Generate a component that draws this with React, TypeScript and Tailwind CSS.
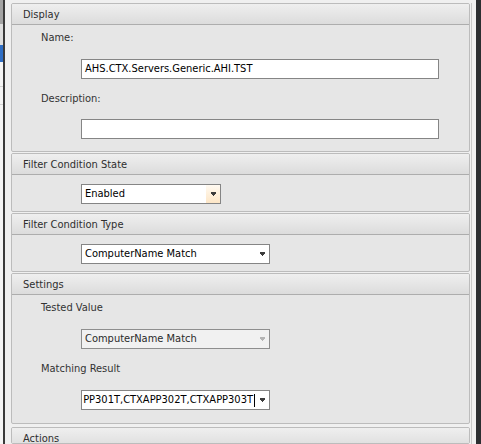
import React from "react";

const font = "font-['DejaVu_Sans_Condensed','DejaVu_Sans',sans-serif] font-stretch-condensed";

const Arrow = ({ color = "#3c3c3c" }: { color?: string }) => (
  <svg width="5" height="4" viewBox="0 0 5 4" shapeRendering="crispEdges">
    <rect x="0" y="0" width="5" height="1" fill={color} />
    <rect x="0" y="1" width="5" height="1" fill={color} />
    <rect x="1" y="2" width="3" height="1" fill={color} />
    <rect x="2" y="3" width="1" height="1" fill={color} />
  </svg>
);

const Header = ({ title }: { title: string }) => (
  <div className="h-[21px] flex items-center pl-[11px] pt-[2px] border-b border-[#adadad] bg-gradient-to-b from-[#efefef] to-[#dcdcdc] text-[#2e2e2e]">
    {title}
  </div>
);

const Section = ({
  title,
  children,
  className = "",
}: {
  title: string;
  children?: React.ReactNode;
  className?: string;
}) => (
  <div className={`border border-[#bcbcbc] rounded-[2px] bg-[#e6e6e6] overflow-hidden ${className}`}>
    <Header title={title} />
    {children}
  </div>
);

const Label = ({ text, className = "" }: { text: string; className?: string }) => (
  <div className={`h-[12px] leading-[16px] pl-[29px] text-[#333] ${className}`}>{text}</div>
);

const TextBox = ({ value = "", className = "" }: { value?: string; className?: string }) => (
  <div
    className={`ml-[69px] w-[358px] h-[20px] border border-[#858585] bg-white flex items-center px-[3px] text-black ${className}`}
  >
    {value}
  </div>
);

const Combo = ({
  value,
  width,
  disabled = false,
  hover = false,
  caret = false,
  className = "",
}: {
  value: string;
  width: string;
  disabled?: boolean;
  hover?: boolean;
  caret?: boolean;
  className?: string;
}) => (
  <div
    className={`ml-[69px] ${width} h-[20px] border ${
      disabled ? "border-[#8e8e8e] bg-[#f1f1f1]" : "border-[#858585] bg-white"
    } flex ${className}`}
  >
    <div className={`flex-1 flex items-center overflow-hidden pl-[3px] ${caret ? "justify-end" : ""}`}>
      <span className={`whitespace-nowrap ${disabled ? "text-[#2b2b2b]" : "text-black"}`}>{value}</span>
      {caret && <span className="w-[1px] h-[13px] bg-black ml-[1px] shrink-0" />}
    </div>
    <div
      className={`w-[14px] flex items-center justify-center ${
        hover ? "bg-gradient-to-b from-[#fffaf2] to-[#fde6c6]" : ""
      }`}
    >
      <Arrow color={disabled ? "#b4b4b4" : "#3c3c3c"} />
    </div>
  </div>
);

export default function App() {
  return (
    <div className={`w-[481px] h-[444px] overflow-hidden flex bg-[#f0f0f0] text-[11px] ${font}`}>
      {/* left neighbour strip */}
      <div className="w-[3px] flex flex-col">
        <div className="h-[24px] bg-[#a3a3a3]" />
        <div className="h-[21px] bg-[#dedede]" />
        <div className="h-[17px] bg-[#2f6ec4]" />
        <div className="h-[25px] bg-[#f5f5f5] border-b border-[#d3d3d3]" />
        <div className="h-[18px] bg-[#f5f5f5] border-b border-[#d3d3d3]" />
        <div className="flex-1 bg-[#f5f5f5]" />
      </div>
      <div className="w-[2px] bg-[#3a3a3a]" />

      {/* main panel */}
      <div className="flex-1 flex pl-[6px] pt-[3px]">
        <div className="w-[459px] flex flex-col">
          <Section title="Display" className="mb-[1px]">
            <div className="h-[126px] pt-[5px]">
              <Label text="Name:" />
              <TextBox value="AHS.CTX.Servers.Generic.AHI.TST" className="mt-[17px]" />
              <Label text="Description:" className="mt-[12px]" />
              <TextBox className="mt-[16px]" />
            </div>
          </Section>

          <Section title="Filter Condition State" className="mb-[1px]">
            <div className="h-[36px] pt-[9px]">
              <Combo value="Enabled" width="w-[140px]" hover />
            </div>
          </Section>

          <Section title="Filter Condition Type" className="mb-[1px]">
            <div className="h-[36px] pt-[9px]">
              <Combo value="ComputerName Match" width="w-[189px]" />
            </div>
          </Section>

          <Section title="Settings" className="mb-[3px]">
            <div className="h-[128px] pt-[5px]">
              <Label text="Tested Value" />
              <Combo value="ComputerName Match" width="w-[189px]" disabled className="mt-[17px]" />
              <Label text="Matching Result" className="mt-[12px]" />
              <Combo
                value="PP301T,CTXAPP302T,CTXAPP303T"
                width="w-[189px]"
                caret
                className="mt-[17px]"
              />
            </div>
          </Section>

          <Section title="Actions" className="flex-1" />
        </div>
        <div className="w-[1px]" />
        <div className="w-[1px] bg-[#c9c9c9]" />
        <div className="flex-1" />
      </div>

      <div className="w-[5px] bg-[#2c2e31]" />
    </div>
  );
}
